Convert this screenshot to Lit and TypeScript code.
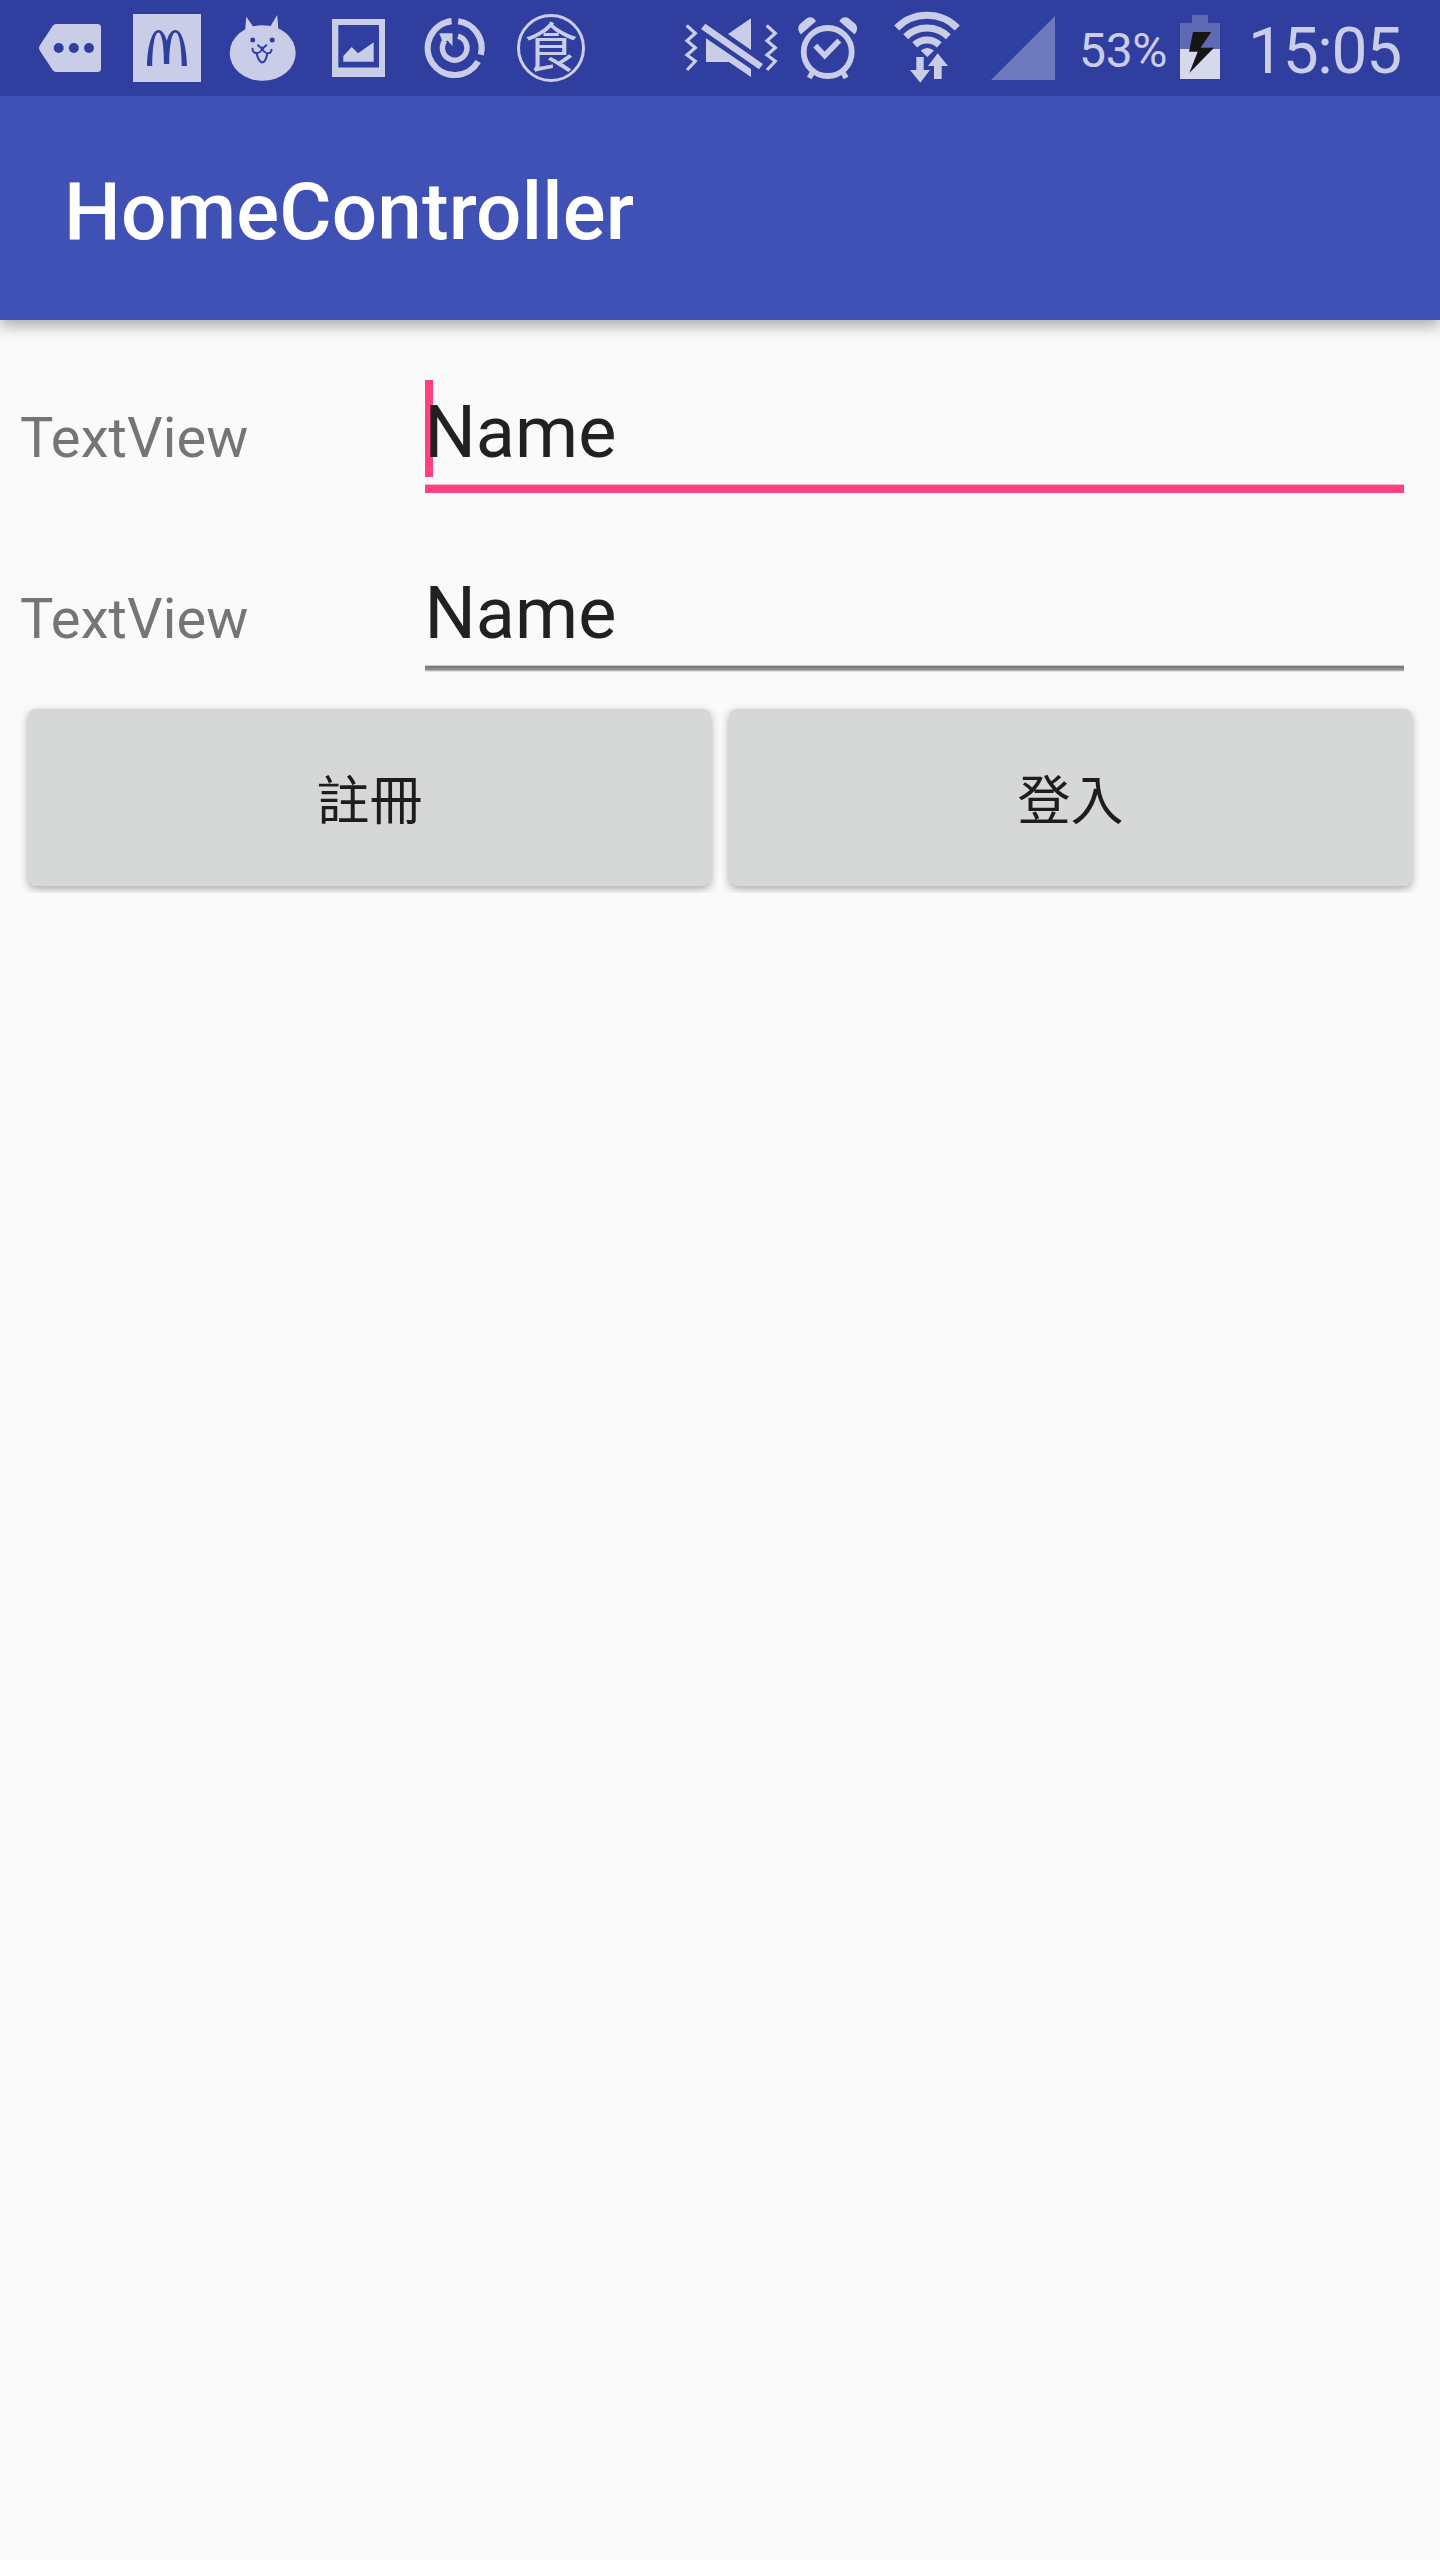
import { LitElement, html, css, svg } from "lit";
import { customElement, property } from "lit/decorators.js";

const slot = (x: number, width: number, content: unknown) => html`
  <svg class="icon" width=${width} height="96" viewBox="${x} 0 ${width} 96">${content}</svg>
`;

const message = svg`
  <path class="fill" d="M56 24H97.5a3.5 3.5 0 0 1 3.5 3.5V68.500a3.500 3.500 0 0 1-3.500 3.500H56q-2 0-3.200-1.700L39.700 50.500q-1.400-2.500 0-5L52.800 25.700Q54 24 56 24Z"/>
  <g class="cut"><circle cx="58.7" cy="48" r="5"/><circle cx="73.800" cy="48" r="5"/><circle cx="89" cy="48" r="5"/></g>`;

const arches = svg`
  <rect class="fill" x="133" y="14" width="68" height="68"/>
  <path class="cut" d="M147 66C147.500 46 152 30 158.500 30C162 30 165 34 166.800 41C168.500 34 171.500 30 175.500 30C182 30 186.500 46 187 66H181.700C181.700 48 179.500 32.500 175.500 32.500C171.500 32.500 169.300 46 169.300 64H164C164 46 162 32.500 158.300 32.500C154.500 32.500 152.300 48 152.300 66Z"/>`;

const cat = svg`
  <ellipse class="fill" cx="262.700" cy="53" rx="33" ry="27.800"/>
  <path class="fill" d="M245 32L246.300 16.700L253.500 27ZM278.500 31L277.200 15L270 27Z"/>
  <circle class="cut" cx="252.700" cy="40" r="2.500"/><circle class="cut" cx="272.200" cy="40" r="2.500"/>
  <path class="cut-line" d="M252.500 48.800C252.500 54.500 260 54.500 262.300 48.500C264.500 54.500 271.500 54.500 271.500 49.800M258 45.200L262.300 49L266.300 45.200M256.700 53.500C257.500 58 260 62.300 262.300 62.500C264.700 62.300 266.500 58 267.300 53.500"/>`;

const picture = svg`
  <path class="fill" fill-rule="evenodd" d="M332 19H385V77H332ZM338.300 25V67.500H379V25Z"/>
  <path class="fill" d="M343.300 56L351.700 47L358 53.300L373.700 42.300V61.700H343.300Z"/>`;

const cycle = svg`
  <path class="line" stroke-width="6.200" d="M458.200 21.200A27 27 0 0 1 480.800 54.800M478.100 61.500A27 27 0 1 1 451.600 21.200"/>
  <path class="line" stroke-width="5.400" d="M458 36.100A12.300 12.300 0 1 1 444.700 40.800"/>
  <path class="fill" d="M439.300 33.300H452.500V46L447.500 40.500L443 43Z"/>`;

const meal = svg`
  <circle class="line" stroke-width="3" cx="551" cy="48" r="32.500"/>
  <text class="fill glyph" x="551" y="67.500" text-anchor="middle">食</text>`;

const muted = svg`
  <path class="line" stroke-width="3.200" d="M686.700 25.500L695.300 33.300L687 40.700L695.300 47.700L687 55L695.300 61.300L687 70M766.700 25.500L775.300 33.300L767 40.700L775.300 47.700L767 55L775.300 61.300L767 70"/>
  <path class="fill" d="M701 29L705.300 23.700L763 64L759 69.300ZM728 34L751 18.300V50ZM706 38.300L751 69V77L729 62H706Z"/>`;

const alarm = svg`
  <circle class="line" stroke-width="5.800" cx="827.700" cy="52" r="24"/>
  <path class="line" stroke-width="5.400" d="M815.300 45.700L824.700 55.500L839.300 40.500M813.500 70.500L809.300 78M841.900 70.500L846.100 78"/>
  <path class="fill" d="M801 34.300L816 21.300C814 17 810 16 806.500 18.500L800.500 23.500C797 27 798 31.500 801 34.300ZM854.400 34.300L839.400 21.300C841.400 17 845.400 16 848.900 18.500L854.900 23.500C858.400 27 857.400 31.500 854.400 34.300Z"/>`;

const wifi = svg`
  <path class="line" stroke-width="7" d="M896.700 28A42.500 42.500 0 0 1 957.300 28M905.700 36.700A30.500 30.500 0 0 1 948.300 36.700M914.700 44.900A18 18 0 0 1 939.300 44.900"/>
  <path class="fill" d="M920.700 50.500Q927.300 45.500 934 50.500L927.300 57Z"/>
  <path class="fill" d="M916.300 57H923.700V70H930L920.300 82.700L910 70H916.300ZM937.700 53.300L948 66H941.700V79H934V66H928Z"/>`;

const signal = svg`<path class="faint" d="M991 80L1055 16V80Z"/>`;

const battery = svg`
  <path class="empty" d="M1192 15H1208V23H1220V49H1180V23H1192Z"/>
  <rect class="charge" x="1180" y="49" width="40" height="30"/>
  <path class="bolt" d="M1193 32H1211.300L1200.500 47.700H1214L1189.300 73L1197.700 51.700H1189Z"/>`;

@customElement("status-bar")
class StatusBar extends LitElement {
  static styles = css`
    :host { display: flex; justify-content: space-between; height: 96px; background: #303f9f; color: #c9cde8; padding: 0 36px 0 22px; box-sizing: border-box; }
    .group { display: flex; }
    .icon { display: block; flex: none; }
    .fill { fill: #c9cde8; }
    .line { fill: none; stroke: #c9cde8; }
    .cut { fill: #303f9f; }
    .cut-line { fill: none; stroke: #303f9f; stroke-width: 2; stroke-linecap: round; }
    .faint { fill: #6f79bd; }
    .empty { fill: #5f6ab4; }
    .charge { fill: #d6d9ec; }
    .bolt { fill: #151515; }
    .glyph { font: 400 54px "Noto Sans CJK TC", sans-serif; }
    .percent { width: 101px; margin-left: -1px; font-size: 48px; font-weight: 400; letter-spacing: -0.3px; line-height: 101px; height: 96px; }
    .time { width: 156px; font-size: 64px; font-weight: 400; letter-spacing: -1.3px; line-height: 103px; height: 96px; white-space: nowrap; }
  `;
  render() {
    return html`
      <div class="group">
        ${slot(22, 96, message)}${slot(118, 96, arches)}${slot(214, 96, cat)}
        ${slot(310, 96, picture)}${slot(406, 96, cycle)}${slot(502, 96, meal)}
      </div>
      <div class="group">
        ${slot(680, 104, muted)}${slot(784, 92, alarm)}${slot(876, 100, wifi)}${slot(976, 104, signal)}
        <div class="percent">53%</div>
        ${slot(1180, 68, battery)}
        <div class="time">15:05</div>
      </div>
    `;
  }
}

@customElement("form-row")
class FormRow extends LitElement {
  @property() label = "";
  @property() value = "";
  @property({ type: Boolean, reflect: true }) active = false;
  static styles = css`
    :host { display: flex; height: 181px; }
    .label { width: 405px; padding-top: 65px; font-size: 56px; letter-spacing: 0.12px; line-height: 66px; color: #757575; }
    .field { position: relative; width: 979px; height: 113px; margin-top: 40px; box-sizing: border-box; }
    .value { display: block; margin-left: -0.5px; font-size: 72px; line-height: 105px; color: #212121; position: relative; }
    .caret { position: absolute; left: 0; top: 0; width: 8px; height: 97px; background: #ff4081; }
    .rule { height: 7px; margin-top: -1px; background: linear-gradient(#c9c9c9 1px, #7b7b7b 1px 3px, #8e8e8e 3px 5px, #b4b4b4 5px 6px, #e2e2e2 6px); }
    :host([active]) .rule { height: 8px; background: #ff4081; border-top: 1px solid #fbb0c8; }
  `;
  render() {
    return html`
      <div class="label">${this.label}</div>
      <div class="field">
        ${this.active ? html`<span class="caret"></span>` : null}
        <span class="value">${this.value}</span>
        <div class="rule"></div>
      </div>
    `;
  }
}

@customElement("app-root")
class AppRoot extends LitElement {
  static styles = css`
    :host { display: block; min-height: 2560px; background: #fafafa; font-family: Roboto, "Noto Sans CJK TC", sans-serif; }
    .toolbar { position: relative; height: 224px; box-sizing: border-box; padding: 8px 0 0 64px; background: #3f51b5; color: #fff; font-size: 80px; font-weight: 500; letter-spacing: 0.15px; line-height: 217px; box-shadow: 0 6px 14px rgba(0, 0, 0, 0.32); clip-path: inset(0 0 -30px 0); }
    .form { padding: 20px 0 0 20px; }
    .actions { display: flex; gap: 18px; margin-top: -3px; padding: 10px 28px 8px; overflow: hidden; height: 194px; box-sizing: border-box; }
    .button { flex: 1; height: 177px; border: 0; border-radius: 8px; padding: 0; background: #d6d8d7; color: #1d1d1d; font: 400 53px "Noto Sans CJK TC", sans-serif; line-height: 177px; box-shadow: 0 3px 9px rgba(0, 0, 0, 0.32); }
  `;
  render() {
    return html`
      <status-bar></status-bar>
      <header class="toolbar">HomeController</header>
      <main>
        <div class="form">
          <form-row label="TextView" value="Name" active></form-row>
          <form-row label="TextView" value="Name"></form-row>
        </div>
        <div class="actions">
          <button class="button">註冊</button>
          <button class="button">登入</button>
        </div>
      </main>
    `;
  }
}
